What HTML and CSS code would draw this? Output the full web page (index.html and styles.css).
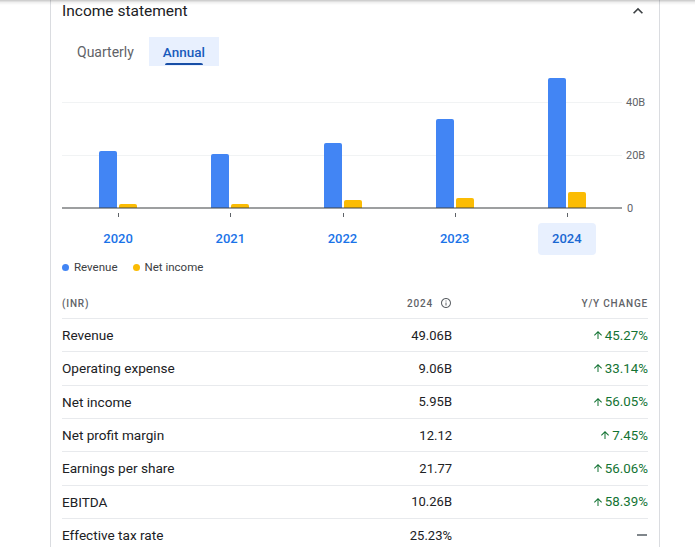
FILE: index.html
```html
<!DOCTYPE html>
<html lang="en">
<head>
<meta charset="utf-8">
<title>Income statement</title>
<link rel="stylesheet" href="styles.css">
</head>
<body>
<div class="top-shadow"></div>
<section class="card">
  <header class="card-head">
    <h2 class="title">Income statement</h2>
    <svg class="chevron" viewBox="0 0 24 24" width="20" height="20"><path d="M7.41 15.41L12 10.83l4.59 4.58L18 14l-6-6-6 6z"/></svg>
  </header>

  <nav class="tabs">
    <span class="tab">Quarterly</span>
    <span class="tab active">Annual</span>
  </nav>

  <svg class="chart" width="586" height="153" viewBox="0 0 586 153">
    <line x1="0" y1="32.5" x2="560" y2="32.5" stroke="#f1f3f4" stroke-width="1"/>
    <line x1="0" y1="85.5" x2="560" y2="85.5" stroke="#f1f3f4" stroke-width="1"/>
    <g fill="#4285f4">
      <rect x="37" y="81" width="18" height="60" rx="2"/>
      <rect x="149" y="84" width="18" height="57" rx="2"/>
      <rect x="262" y="73" width="18" height="68" rx="2"/>
      <rect x="374" y="49" width="18" height="92" rx="2"/>
      <rect x="486" y="8" width="18" height="133" rx="2"/>
    </g>
    <g fill="#fbbc04">
      <rect x="57" y="134" width="18" height="7" rx="2"/>
      <rect x="169" y="134" width="18" height="7" rx="2"/>
      <rect x="282" y="130" width="18" height="11" rx="2"/>
      <rect x="394" y="128" width="18" height="13" rx="2"/>
      <rect x="506" y="122" width="18" height="19" rx="2"/>
    </g>
    <rect x="0" y="138" width="586" height="15" fill="#fff"/>
    <line x1="0" y1="138" x2="560" y2="138" stroke="#3c4043" stroke-width="1.2"/>
    <g stroke="#5f6368" stroke-width="1">
      <line x1="56.5" y1="143" x2="56.5" y2="147"/>
      <line x1="168.5" y1="143" x2="168.5" y2="147"/>
      <line x1="281.5" y1="143" x2="281.5" y2="147"/>
      <line x1="393.5" y1="143" x2="393.5" y2="147"/>
      <line x1="505.5" y1="143" x2="505.5" y2="147"/>
    </g>
    <g class="axis-label" fill="#5f6368">
      <text x="564" y="36">40B</text>
      <text x="564" y="89">20B</text>
      <text x="565" y="142">0</text>
    </g>
  </svg>

  <div class="years">
    <span class="year">2020</span>
    <span class="year">2021</span>
    <span class="year">2022</span>
    <span class="year">2023</span>
    <span class="year selected">2024</span>
  </div>

  <div class="legend">
    <span class="legend-item"><i class="dot blue"></i>Revenue</span>
    <span class="legend-item"><i class="dot yellow"></i>Net income</span>
  </div>

  <div class="table">
    <div class="row head">
      <span>(INR)</span>
      <span class="num">2024 <svg class="info" viewBox="0 0 24 24" width="12" height="12"><path d="M11 7h2v2h-2zm0 4h2v6h-2zm1-9C6.48 2 2 6.48 2 12s4.48 10 10 10 10-4.48 10-10S17.52 2 12 2zm0 18c-4.41 0-8-3.59-8-8s3.59-8 8-8 8 3.59 8 8-3.59 8-8 8z"/></svg></span>
      <span class="num">Y/Y change</span>
    </div>
    <div class="row">
      <span class="label">Revenue</span><span class="num">49.06B</span>
      <span class="change up"><svg viewBox="0 0 24 24" width="12" height="12"><path d="M4 12l1.41 1.41L11 7.83V20h2V7.83l5.58 5.59L20 12l-8-8-8 8z"/></svg>45.27%</span>
    </div>
    <div class="row">
      <span class="label">Operating expense</span><span class="num">9.06B</span>
      <span class="change up"><svg viewBox="0 0 24 24" width="12" height="12"><path d="M4 12l1.41 1.41L11 7.83V20h2V7.83l5.58 5.59L20 12l-8-8-8 8z"/></svg>33.14%</span>
    </div>
    <div class="row">
      <span class="label">Net income</span><span class="num">5.95B</span>
      <span class="change up"><svg viewBox="0 0 24 24" width="12" height="12"><path d="M4 12l1.41 1.41L11 7.83V20h2V7.83l5.58 5.59L20 12l-8-8-8 8z"/></svg>56.05%</span>
    </div>
    <div class="row">
      <span class="label">Net profit margin</span><span class="num">12.12</span>
      <span class="change up"><svg viewBox="0 0 24 24" width="12" height="12"><path d="M4 12l1.41 1.41L11 7.83V20h2V7.83l5.58 5.59L20 12l-8-8-8 8z"/></svg>7.45%</span>
    </div>
    <div class="row">
      <span class="label">Earnings per share</span><span class="num">21.77</span>
      <span class="change up"><svg viewBox="0 0 24 24" width="12" height="12"><path d="M4 12l1.41 1.41L11 7.83V20h2V7.83l5.58 5.59L20 12l-8-8-8 8z"/></svg>56.06%</span>
    </div>
    <div class="row">
      <span class="label">EBITDA</span><span class="num">10.26B</span>
      <span class="change up"><svg viewBox="0 0 24 24" width="12" height="12"><path d="M4 12l1.41 1.41L11 7.83V20h2V7.83l5.58 5.59L20 12l-8-8-8 8z"/></svg>58.39%</span>
    </div>
    <div class="row">
      <span class="label">Effective tax rate</span><span class="num">25.23%</span>
      <span class="change"><i class="dash"></i></span>
    </div>
  </div>
</section>
</body>
</html>
```

FILE: styles.css
```css
* { box-sizing: border-box; }

html, body {
  margin: 0;
  padding: 0;
  background: #fff;
  font-family: Roboto, "Liberation Sans", Arial, sans-serif;
  color: #202124;
  overflow: hidden;
}

.top-shadow {
  position: fixed;
  top: 0;
  left: 0;
  right: 0;
  height: 5px;
  background: linear-gradient(to bottom, rgba(0,0,0,0.22), rgba(0,0,0,0.06) 50%, rgba(0,0,0,0));
  z-index: 5;
}

.card {
  margin-left: 50px;
  width: 610px;
  min-height: 547px;
  border-left: 1px solid #dadce0;
  border-right: 1px solid #dadce0;
  padding: 0 11px;
}

.card-head {
  display: flex;
  align-items: center;
  justify-content: space-between;
  height: 22px;
}

.title {
  margin: 0;
  font-size: 15.5px;
  font-weight: 400;
  line-height: 22px;
  color: #202124;
}

.chevron {
  fill: #3c4043;
}

.tabs {
  display: flex;
  margin-top: 15px;
  height: 29px;
}

.tab {
  display: flex;
  align-items: center;
  padding: 0 15px;
  font-size: 14px;
  font-weight: 400;
  color: #5f6368;
  position: relative;
}

.tab.active {
  padding: 0 14px;
  background: #e8f0fe;
  color: #185abc;
  font-weight: 500;
  font-size: 13.5px;
}

.tab.active::after {
  content: "";
  position: absolute;
  left: 16px;
  right: 16px;
  bottom: 1px;
  height: 2.5px;
  border-radius: 2px 2px 0 0;
  background: #174ea6;
}

.chart {
  display: block;
  margin-top: 4px;
}

.axis-label {
  font-family: Roboto, "Liberation Sans", sans-serif;
  font-size: 11px;
}

.years {
  display: grid;
  grid-template-columns: repeat(5, 112.2px);
  height: 32px;
}

.year {
  justify-self: center;
  padding: 0 14px;
  height: 32px;
  line-height: 32px;
  font-size: 13px;
  font-weight: 500;
  color: #1a73e8;
  border-radius: 4px;
}

.year.selected {
  background: #e8f0fe;
  color: #1967d2;
}

.legend {
  display: flex;
  gap: 15px;
  margin-top: 4px;
  height: 16px;
  align-items: center;
}

.legend-item {
  display: flex;
  align-items: center;
  font-size: 11.5px;
  color: #3c4043;
}

.dot {
  width: 7px;
  height: 7px;
  border-radius: 50%;
  margin-right: 5px;
}

.dot.blue { background: #4285f4; }
.dot.yellow { background: #fbbc04; }

.table {
  margin-top: 13px;
}

.row {
  display: grid;
  grid-template-columns: 1fr 140px 196px;
  align-items: center;
  height: 33.33px;
  border-top: 1px solid #e8eaed;
  font-size: 13px;
  color: #202124;
}

.label {
  font-size: 13.6px;
}

.row.head {
  height: 30px;
  border-top: none;
  font-size: 10px;
  font-weight: 500;
  letter-spacing: 0.8px;
  color: #5f6368;
  text-transform: uppercase;
}

.num {
  text-align: right;
  display: flex;
  justify-content: flex-end;
  align-items: center;
}

.info {
  fill: #5f6368;
  margin-left: 7px;
}

.change {
  display: flex;
  justify-content: flex-end;
  align-items: center;
  font-size: 13.3px;
}

.change.up {
  color: #137333;
}

.change.up svg {
  fill: #137333;
  margin-right: 1px;
}

.dash {
  display: block;
  width: 10px;
  height: 1.5px;
  background: #80868b;
  margin-right: 1px;
}
```
